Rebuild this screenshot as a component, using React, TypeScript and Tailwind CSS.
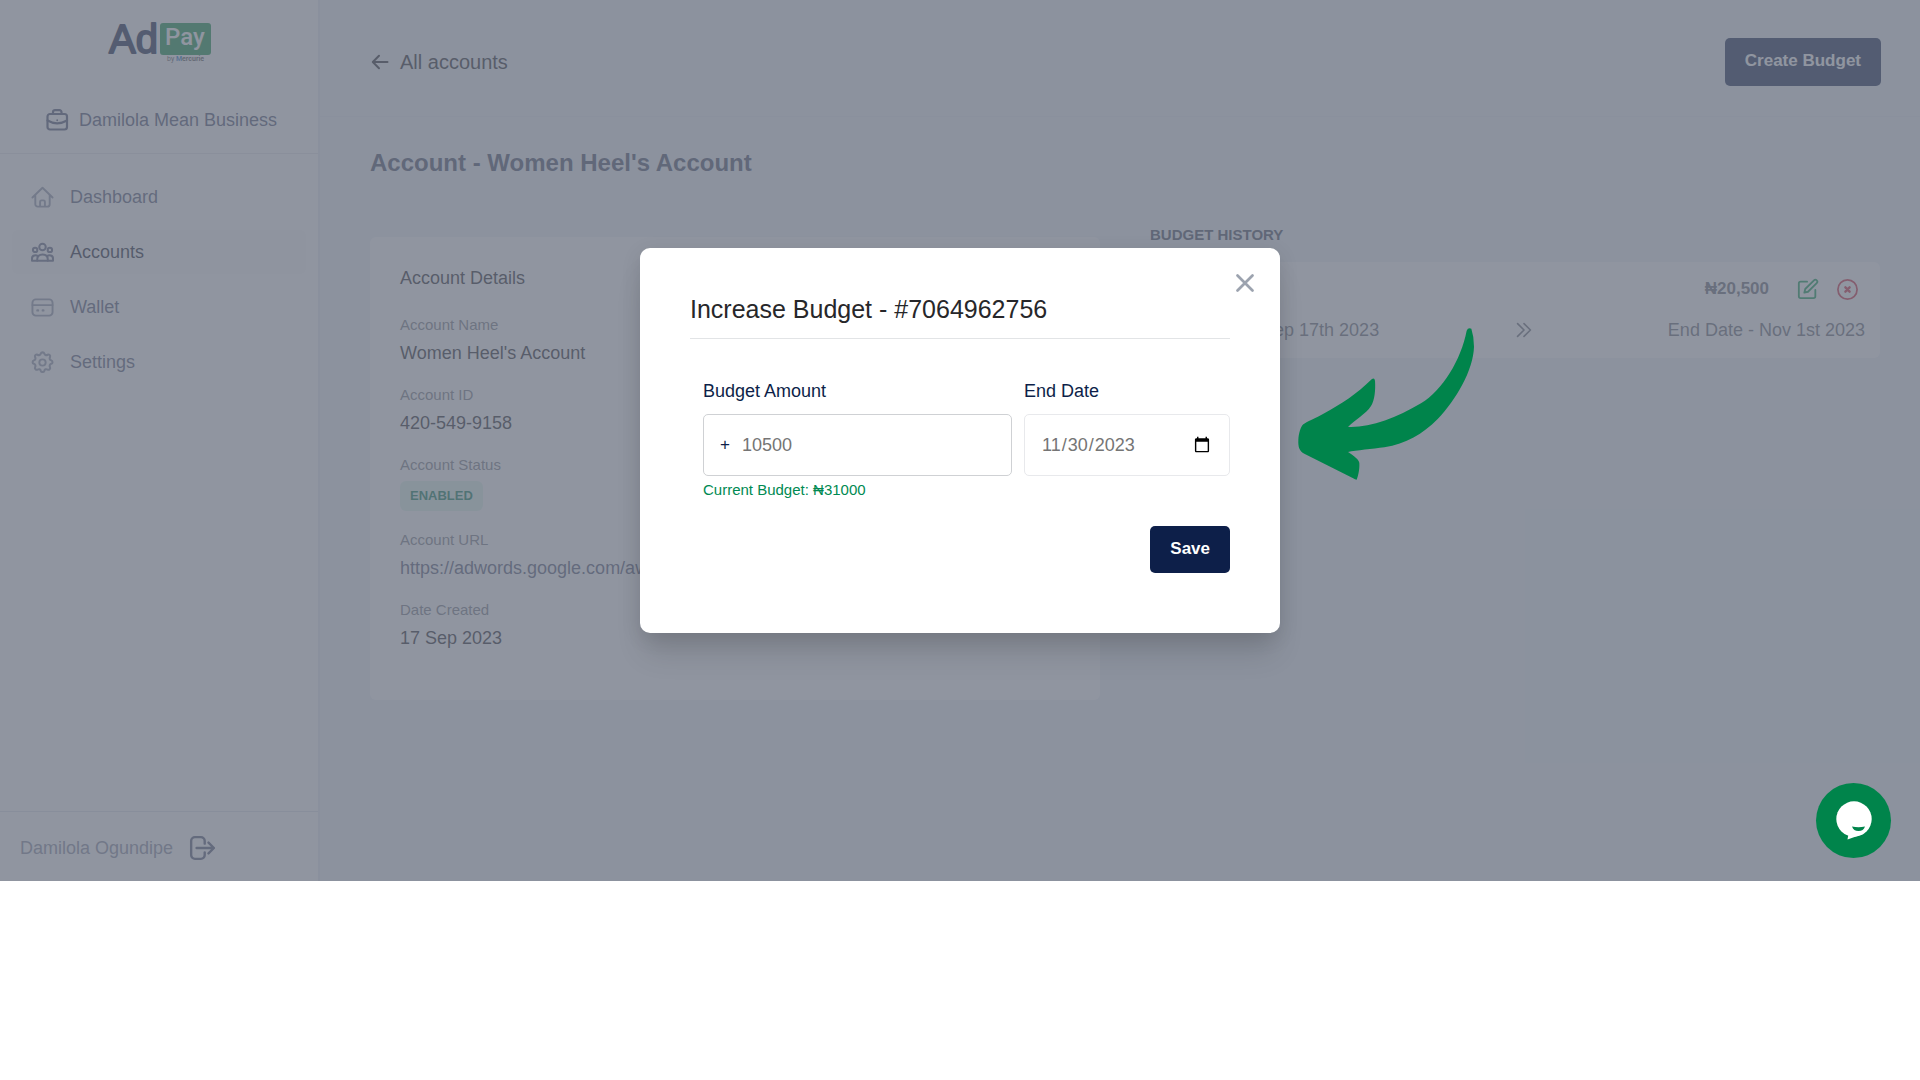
import React from "react";
import { FiEdit } from "react-icons/fi";

type IconProps = { className?: string };

const stroke = {
  fill: "none",
  stroke: "currentColor",
  strokeLinecap: "round" as const,
  strokeLinejoin: "round" as const,
};

function HomeIcon({ className }: IconProps) {
  return (
    <svg viewBox="0 0 24 24" className={className} {...stroke} strokeWidth="2" aria-hidden="true">
      <path d="M1.500 12 12 1.800 22.500 12M4.500 9.500V19a2.500 2.500 0 0 0 2.500 2.500h10a2.500 2.500 0 0 0 2.500-2.500V9.500" />
      <path d="M9.500 21v-4.500a1.500 1.500 0 0 1 1.500-1.500h2a1.500 1.500 0 0 1 1.500 1.500V21" />
    </svg>
  );
}

function UsersIcon({ className }: IconProps) {
  return (
    <svg viewBox="0 0 24 24" className={className} {...stroke} strokeWidth="2.100" aria-hidden="true">
      <circle cx="12" cy="6.300" r="3.400" />
      <circle cx="4.300" cy="9.300" r="2.300" />
      <circle cx="19.700" cy="9.300" r="2.300" />
      <path d="M6.500 20.500v-1.500c0-3 2-5 5.500-5s5.500 2 5.500 5v1.500z" />
      <path d="M6.500 20.500H1v-2c0-2.300 1.400-3.700 3.500-3.700 1.300 0 2 .3 2.700.9M17.500 20.500H23v-2c0-2.300-1.400-3.700-3.500-3.700-1.300 0-2 .3-2.700.9" />
    </svg>
  );
}

function WalletIcon({ className }: IconProps) {
  return (
    <svg viewBox="0 0 24 24" className={className} {...stroke} strokeWidth="2" aria-hidden="true">
      <rect x="1.500" y="3.500" width="21" height="17" rx="3.500" />
      <path d="M1.500 9.500h21" />
      <path d="M6.700 15h.6M12.300 15h.6" strokeWidth="2.500" />
    </svg>
  );
}

function GearIcon({ className }: IconProps) {
  return (
    <svg viewBox="0 0 24 24" className={className} {...stroke} strokeWidth="2" aria-hidden="true">
      <circle cx="12" cy="12" r="3.300" />
      <path
        d="M10.300 2.800c.5-1.500 2.900-1.500 3.400 0 .4 1.500 1.800 2 3.100 1.200 1.500-.8 3.100.8 2.400 2.300-.8 1.300-.2 2.700 1.200 3.100 1.600.6 1.600 2.900 0 3.400-1.400.4-2 1.900-1.200 3.200.7 1.500-.9 3.100-2.400 2.300-1.300-.8-2.700-.2-3.100 1.200-.5 1.500-2.900 1.500-3.400 0-.4-1.400-1.800-2-3.100-1.200-1.500.8-3.100-.8-2.400-2.300.8-1.300.2-2.800-1.200-3.200-1.600-.5-1.600-2.800 0-3.400 1.400-.4 2-1.800 1.200-3.100-.7-1.500.9-3.100 2.400-2.300 1.300.8 2.700.3 3.100-1.200z"
        transform="translate(-0.900 -0.400) scale(1.080)"
      />
    </svg>
  );
}

function BriefcaseIcon({ className }: IconProps) {
  return (
    <svg viewBox="0 0 24 24" className={className} {...stroke} strokeWidth="2.200" aria-hidden="true">
      <rect x="2.500" y="6" width="19.500" height="15.500" rx="2.500" />
      <path d="M8 6V4A2 2 0 0 1 10 2.200h4.500a2 2 0 0 1 2 2v1.800M2.500 12.500c3.500 2 6.500 2.800 9.700 2.800s6.300-.8 9.800-2.800" />
      <path d="M12.200 12.200v.1" strokeWidth="1.800" />
    </svg>
  );
}

function LogoutIcon({ className }: IconProps) {
  return (
    <svg viewBox="0 0 24 24" className={className} {...stroke} strokeWidth="2.200" aria-hidden="true">
      <path d="M14.500 8V5.500a3.500 3.500 0 0 0-3.500-3.500H5.500a3.500 3.500 0 0 0-3.500 3.500v13a3.500 3.500 0 0 0 3.500 3.500h5.500a3.500 3.500 0 0 0 3.500-3.500v-2.500M7 12h16M18 7l5 5-5 5" />
    </svg>
  );
}

function Logo() {
  return (
    <svg viewBox="0 0 108 42" className="h-[42px] w-[108px] overflow-visible" role="img" aria-label="AdPay by Mercurie">
      <text x="4" y="31" fontSize="40" fontFamily="Liberation Sans, sans-serif" fill="#101f45" stroke="#101f45" strokeWidth="1.800" strokeLinejoin="round">Ad</text>
      <rect x="55" y="1" width="51" height="32" rx="3" fill="#0f9143" />
      <text x="60" y="23" fontSize="24" fontWeight="500" fontFamily="Roboto, sans-serif" fill="#fff">Pay</text>
      <text x="62" y="39" fontSize="7" fontFamily="Roboto, sans-serif" fill="#555">
        by <tspan fontWeight="700" fill="#2478c8">M</tspan><tspan fontWeight="700">ercurie</tspan>
      </text>
    </svg>
  );
}

const navItems = [
  { label: "Dashboard", Icon: HomeIcon },
  { label: "Accounts", Icon: UsersIcon, active: true },
  { label: "Wallet", Icon: WalletIcon },
  { label: "Settings", Icon: GearIcon },
];

function Sidebar() {
  return (
    <aside className="flex w-80 shrink-0 flex-col border-r-2 border-[#e8ecf1] bg-white">
      <div className="flex justify-center pt-[22px]">
        <Logo />
      </div>
      <button className="mt-[42px] flex h-7 items-center justify-center gap-[10px] pl-1 text-lg text-[#4a5170]">
        <BriefcaseIcon className="size-6 text-[#4a5170]" />
        Damilola Mean Business
      </button>
      <nav className="mt-[19px] flex flex-1 flex-col gap-[11px] border-t border-[#e5e7eb] px-3 pt-[21px]">
        {navItems.map(({ label, Icon, active }) => (
          <a
            key={label}
            href="#"
            className={
              active
                ? "flex h-11 items-center gap-4 rounded-md bg-[#fafafa] px-[19px] text-lg text-[#151a30]"
                : "flex h-11 items-center gap-4 rounded-md px-[19px] text-lg text-[#525876]"
            }
          >
            <Icon className={active ? "size-[23px] text-[#5d6380]" : "size-[23px] text-[#8d92a6]"} />
            {label}
          </a>
        ))}
      </nav>
      <div className="flex h-[70px] items-center gap-4 border-t border-[#e0e3e9] px-5 pt-[2px] text-lg text-[#868ba0]">
        Damilola Ogundipe
        <button aria-label="Log out">
          <LogoutIcon className="size-[26px] text-[#525876]" />
        </button>
      </div>
    </aside>
  );
}

function Detail({ label, children }: { label: string; children: React.ReactNode }) {
  return (
    <div>
      <dt className="text-[15px] leading-5 text-[#777b86]">{label}</dt>
      <dd className="mt-1 text-lg leading-7 text-[#222228]">{children}</dd>
    </div>
  );
}

function AccountDetails() {
  return (
    <section className="rounded-md bg-white px-[30px] pt-[27px] pb-12">
      <h2 className="text-lg leading-7 text-[#222228]">Account Details</h2>
      <dl className="mt-[23px] flex flex-col gap-[18px]">
        <Detail label="Account Name">Women Heel's Account</Detail>
        <Detail label="Account ID">420-549-9158</Detail>
        <div>
          <dt className="text-[15px] leading-5 text-[#777b86]">Account Status</dt>
          <dd className="mt-[6px] mb-px flex">
            <span className="rounded-md bg-[#def7ec] px-[10px] text-[13px] leading-[30px] font-bold text-[#057a55]">ENABLED</span>
          </dd>
        </div>
        <Detail label="Account URL">
          <a href="#" className="text-[#525876]">https://adwords.google.com/aw/overview</a>
        </Detail>
        <Detail label="Date Created">17 Sep 2023</Detail>
      </dl>
    </section>
  );
}

function BudgetHistory() {
  return (
    <section>
      <h2 className="text-[15px] leading-5 font-bold text-[#42475c]">BUDGET HISTORY</h2>
      <article className="mt-[17px] rounded-md bg-white px-[15px] pt-3 pb-[14px] text-[#666a76]">
        <div className="flex h-[30px] items-center justify-end pr-[6px]">
          <span className="mr-7 text-[17px] font-bold">₦20,500</span>
          <button aria-label="Edit budget" className="mr-[17px] text-[#05994d]">
            <FiEdit className="size-[22px]" />
          </button>
          <button aria-label="Cancel budget" className="text-[#d0243c]">
            <svg viewBox="0 0 24 24" className="size-[23px]" {...stroke} strokeWidth="1.800" aria-hidden="true">
              <circle cx="12" cy="12" r="10" />
              <path d="m9.800 9.800 4.400 4.400m0-4.400-4.400 4.400" strokeWidth="2.500" />
            </svg>
          </button>
        </div>
        <div className="mt-3 flex h-7 items-center justify-between text-lg">
          <span>Start Date - Sep 17th 2023</span>
          <svg viewBox="0 0 24 24" className="size-[22px]" {...stroke} strokeWidth="1.800" aria-hidden="true">
            <path d="m5 5 7 7-7 7M12 5l7 7-7 7" />
          </svg>
          <span>End Date - Nov 1st 2023</span>
        </div>
      </article>
    </section>
  );
}

function BudgetModal() {
  return (
    <div role="dialog" aria-labelledby="modal-title" className="relative w-[640px] rounded-[10px] bg-white px-[50px] pt-11 pb-[60px] shadow-[0_25px_30px_-5px_rgba(0,0,0,0.12),0_5px_20px_rgba(0,0,0,0.1)]">
      <button aria-label="Close" className="absolute top-5 right-5 text-[#9ca3af]">
        <svg viewBox="0 0 24 24" className="size-[30px]" {...stroke} strokeWidth="2.200" aria-hidden="true">
          <path d="M6 18 18 6M6 6l12 12" />
        </svg>
      </button>
      <h2 id="modal-title" className="border-b border-[#e2e4e6] pb-[12px] text-[25px] leading-[34px] text-[#27272a]">
        Increase Budget - #7064962756
      </h2>
      <form className="mt-[38px] pl-[13px]" onSubmit={(e) => e.preventDefault()}>
        <div className="flex gap-3">
          <div className="flex-[3]">
            <label htmlFor="amount" className="block text-lg leading-7 text-[#0d1f49]">Budget Amount</label>
            <div className="mt-[9px] flex h-[62px] items-center rounded-[5px] border border-[#cfd1d4] pl-4">
              <span className="mr-3 text-[17px] text-[#0d1f49]">+</span>
              <input id="amount" type="text" placeholder="10500" className="w-full bg-transparent text-lg outline-none placeholder:text-[#757575]" />
            </div>
            <p className="mt-1 text-[15px] leading-5 text-[#008a52]">Current Budget: ₦31000</p>
          </div>
          <div className="flex-[2]">
            <label htmlFor="end-date" className="block text-lg leading-7 text-[#0d1f49]">End Date</label>
            <input
              id="end-date"
              type="date"
              defaultValue="2023-11-30"
              className="mt-[9px] block h-[62px] w-full rounded-[5px] border border-[#e8e9ec] px-4 text-lg text-[#757575] outline-none"
            />
          </div>
        </div>
        <div className="mt-[26px] flex justify-end">
          <button type="submit" className="h-[47px] rounded-[5px] bg-[#0d1f49] px-5 pb-[2px] text-[17px] font-bold text-white">
            Save
          </button>
        </div>
      </form>
      <svg viewBox="50 345 540 471" className="absolute top-[77px] left-full ml-4 h-[157px] w-[180px]" aria-hidden="true">
        <path
          fill="#00844b"
          d="M562 362Q566 352 576 356Q584 380 584 410C582 480 530 570 475 627C430 672 380 702 315 712C280 717 230 721 206 726C225 738 240 750 240 760C241 780 236 800 232 809Q228 809 220 804L75 731C60 724 56 710 57 690C58 670 64 650 72 643C80 637 110 624 135 610C185 583 235 550 277 508Q285 502 287 512C289 540 286 570 275 588C260 612 225 630 206 651C270 654 350 625 425 580C490 540 545 450 562 362Z"
        />
      </svg>
    </div>
  );
}

export default function App() {
  return (
    <div className="relative flex min-h-[881px] bg-[#edf2f7] font-['Liberation_Sans',Arial,sans-serif]">
      <Sidebar />
      <main className="min-w-0 flex-1">
        <header className="flex h-[117px] items-center justify-between border-b border-[#e6ebf1] pt-[7px] pr-[39px] pl-[50px]">
          <a href="#" className="flex items-center gap-[10px] text-xl text-[#222228]">
            <svg viewBox="0 0 20 20" className="size-5" {...stroke} strokeWidth="2" aria-hidden="true">
              <path d="M17.500 10H3M9 3.800 2.800 10 9 16.200" />
            </svg>
            All accounts
          </a>
          <button className="h-12 rounded-[5px] bg-[#0d1f49] px-5 pb-[2px] text-[17px] font-bold text-white">Create Budget</button>
        </header>
        <div className="pr-10 pl-[50px]">
          <h1 className="mt-7 text-2xl leading-9 font-bold text-[#444b66]">Account - Women Heel's Account</h1>
          <div className="mt-11 grid grid-cols-2 items-start gap-[50px]">
            <div className="pt-3">
              <AccountDetails />
            </div>
            <BudgetHistory />
          </div>
        </div>
      </main>
      <div className="absolute inset-0 flex items-center justify-center bg-[#6b7280]/75">
        <BudgetModal />
      </div>
      <button aria-label="Open chat" className="absolute right-[29px] bottom-[23px] flex size-[75px] items-center justify-center rounded-full bg-[#00844b]">
        <svg viewBox="0 0 36 39" className="h-[39px] w-9" aria-hidden="true">
          <circle cx="18" cy="18" r="17.700" fill="#fff" />
          <path fill="#fff" d="M13 30 11.500 38.500 27 33z" />
          <path fill="#00844b" d="M16 25.500Q22.500 27 29 25.500Q27.500 30 22.500 30T16 25.500z" />
        </svg>
      </button>
    </div>
  );
}
